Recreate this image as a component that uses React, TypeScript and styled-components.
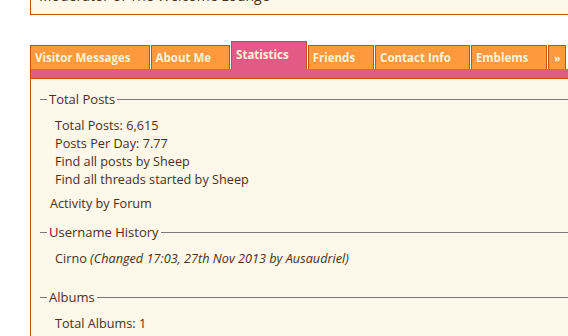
import React from "react";
import styled, { createGlobalStyle } from "styled-components";

const GlobalStyle = createGlobalStyle`
  html, body {
    margin: 0;
    padding: 0;
    background: #ffffff;
    overflow: hidden;
  }
  body {
    font-family: "Open Sans", "DejaVu Sans", sans-serif;
    color: #4a2f1d;
  }
`;

const Page = styled.div`
  padding-left: 30px;
  width: 600px;
`;

const TopBox = styled.div`
  margin-top: -13px;
  background: #fdf8e9;
  border: 1px solid #c9500c;
  border-top: none;
  padding: 0 8px 10px;
  font-size: 14px;
  line-height: 17px;
`;

const TabStrip = styled.div`
  display: flex;
  align-items: flex-end;
  gap: 1px;
  margin-top: 26px;
`;

const Tab = styled.div<{ $active?: boolean }>`
  box-sizing: border-box;
  height: ${(p) => (p.$active ? "28px" : "24px")};
  padding: ${(p) => (p.$active ? "2px 17px 2px 4px" : "1px 18px 0 4px")};
  line-height: 22px;
  background: ${(p) => (p.$active ? "#e35a87" : "#ff993d")};
  border: 1px solid #c9500c;
  border-bottom: none;
  color: #fff3d6;
  font-weight: bold;
  font-size: 11.5px;
  white-space: nowrap;
`;

const MoreTab = styled(Tab)`
  padding: 1px 5px 0;
  font-size: 10px;
`;

const PinkBar = styled.div`
  height: 9px;
  background: #e35a87;
  border-left: 1px solid #c9500c;
  border-bottom: 1px solid #c9500c;
`;

const Panel = styled.div`
  background: #fdf8e9;
  border-left: 1px solid #c9500c;
  padding: 12px 0 40px 9px;
  font-size: 12.7px;
  line-height: 18px;
`;

const Section = styled.fieldset<{ $gap?: number }>`
  margin: ${(p) => p.$gap ?? 0}px 0 0;
  padding: 0 0 0 7px;
  border: none;
  border-top: 1px solid #7d7a76;
  min-width: 0;
`;

const Legend = styled.legend`
  padding: 0 2px;
  font-size: 13px;
  line-height: 16px;
`;

const StatList = styled.ul<{ $below?: number }>`
  list-style: none;
  margin: 9px 0 ${(p) => p.$below ?? 0}px;
  padding: 0 0 0 8px;
`;

const StatRow = styled.li``;

const Muted = styled.em`
  font-style: italic;
`;

const ActivityLink = styled.div`
  margin-top: 6px;
  padding-left: 10px;
`;

const tabs = ["Visitor Messages", "About Me", "Statistics", "Friends", "Contact Info", "Emblems"];

export default function App() {
  return (
    <>
      <GlobalStyle />
      <Page>
        <TopBox>Moderator of The Welcome Lounge</TopBox>

        <TabStrip>
          {tabs.map((t) => (
            <Tab key={t} $active={t === "Statistics"}>
              {t}
            </Tab>
          ))}
          <MoreTab>»</MoreTab>
        </TabStrip>
        <PinkBar />

        <Panel>
          <Section>
            <Legend>Total Posts</Legend>
            <StatList>
              <StatRow>Total Posts: 6,615</StatRow>
              <StatRow>Posts Per Day: 7.77</StatRow>
              <StatRow>Find all posts by Sheep</StatRow>
              <StatRow>Find all threads started by Sheep</StatRow>
            </StatList>
          </Section>
          <ActivityLink>Activity by Forum</ActivityLink>

          <Section $gap={12}>
            <Legend>Username History</Legend>
            <StatList $below={22}>
              <StatRow>
                Cirno <Muted>(Changed 17:03, 27th Nov 2013 by Ausaudriel)</Muted>
              </StatRow>
            </StatList>
          </Section>

          <Section>
            <Legend>Albums</Legend>
            <StatList>
              <StatRow>Total Albums: 1</StatRow>
              <StatRow>Total Pictures: 30</StatRow>
            </StatList>
          </Section>
        </Panel>
      </Page>
    </>
  );
}
